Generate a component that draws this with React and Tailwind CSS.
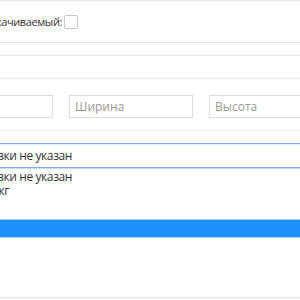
export default function App() {
  return (
    <div className="w-[300px] h-[300px] overflow-hidden bg-white font-['Open_Sans',sans-serif] text-[11px] text-[#333]">
      <div className="-ml-[100px] w-[520px] flex flex-col">
        <div className="h-[43px] border-t border-b border-[#e6e6e6] flex items-center">
          <span className="w-[162px] text-right leading-none whitespace-nowrap tracking-[-0.4px]">Не перекачиваемый:</span>
          <span className="ml-[2px] w-[14px] h-[14px] border border-[#c9c9c9] rounded-[2px] bg-white"></span>
        </div>
        <div className="h-[12px]"></div>
        <div className="h-[24px] border-t border-b border-[#e6e6e6]"></div>
        <div className="mt-[16px] pl-[29px] flex gap-[16px] text-[12px]">
          <input className="w-[124px] h-[23px] border border-[#dcdcdc] px-[5px] outline-none placeholder:text-[#999]" placeholder="Длина" />
          <input className="w-[124px] h-[23px] border border-[#dcdcdc] px-[5px] outline-none placeholder:text-[#999]" placeholder="Ширина" />
          <input className="w-[124px] h-[23px] border border-[#dcdcdc] px-[5px] outline-none placeholder:text-[#999]" placeholder="Высота" />
        </div>
        <div className="mt-[12px] border-t border-[#ececec]"></div>
        <div className="mt-[12px] ml-[29px] h-[25px] border border-[#7fb0e8] shadow-[0_1px_0_#c5dcf5,inset_0_1px_0_#e3eefb] flex items-center whitespace-nowrap text-[12px]">
          <span className="w-[142px] text-right tracking-[-0.4px]">Тип упаковки не указан</span>
        </div>
        <div className="ml-[29px] pt-[2px] flex flex-col leading-[14px] whitespace-nowrap text-[12px] tracking-[-0.4px]">
          <span className="w-[143px] text-right">Тип упаковки не указан</span>
          <span className="w-[80px] text-right">Мешок, кг</span>
        </div>
        <div className="mt-[21px] h-[19px] bg-[#1e90ff] border-t border-b border-[#a9cdf5]"></div>
        <div className="mt-[59px] border-t border-[#e3e3e3]"></div>
      </div>
    </div>
  );
}
